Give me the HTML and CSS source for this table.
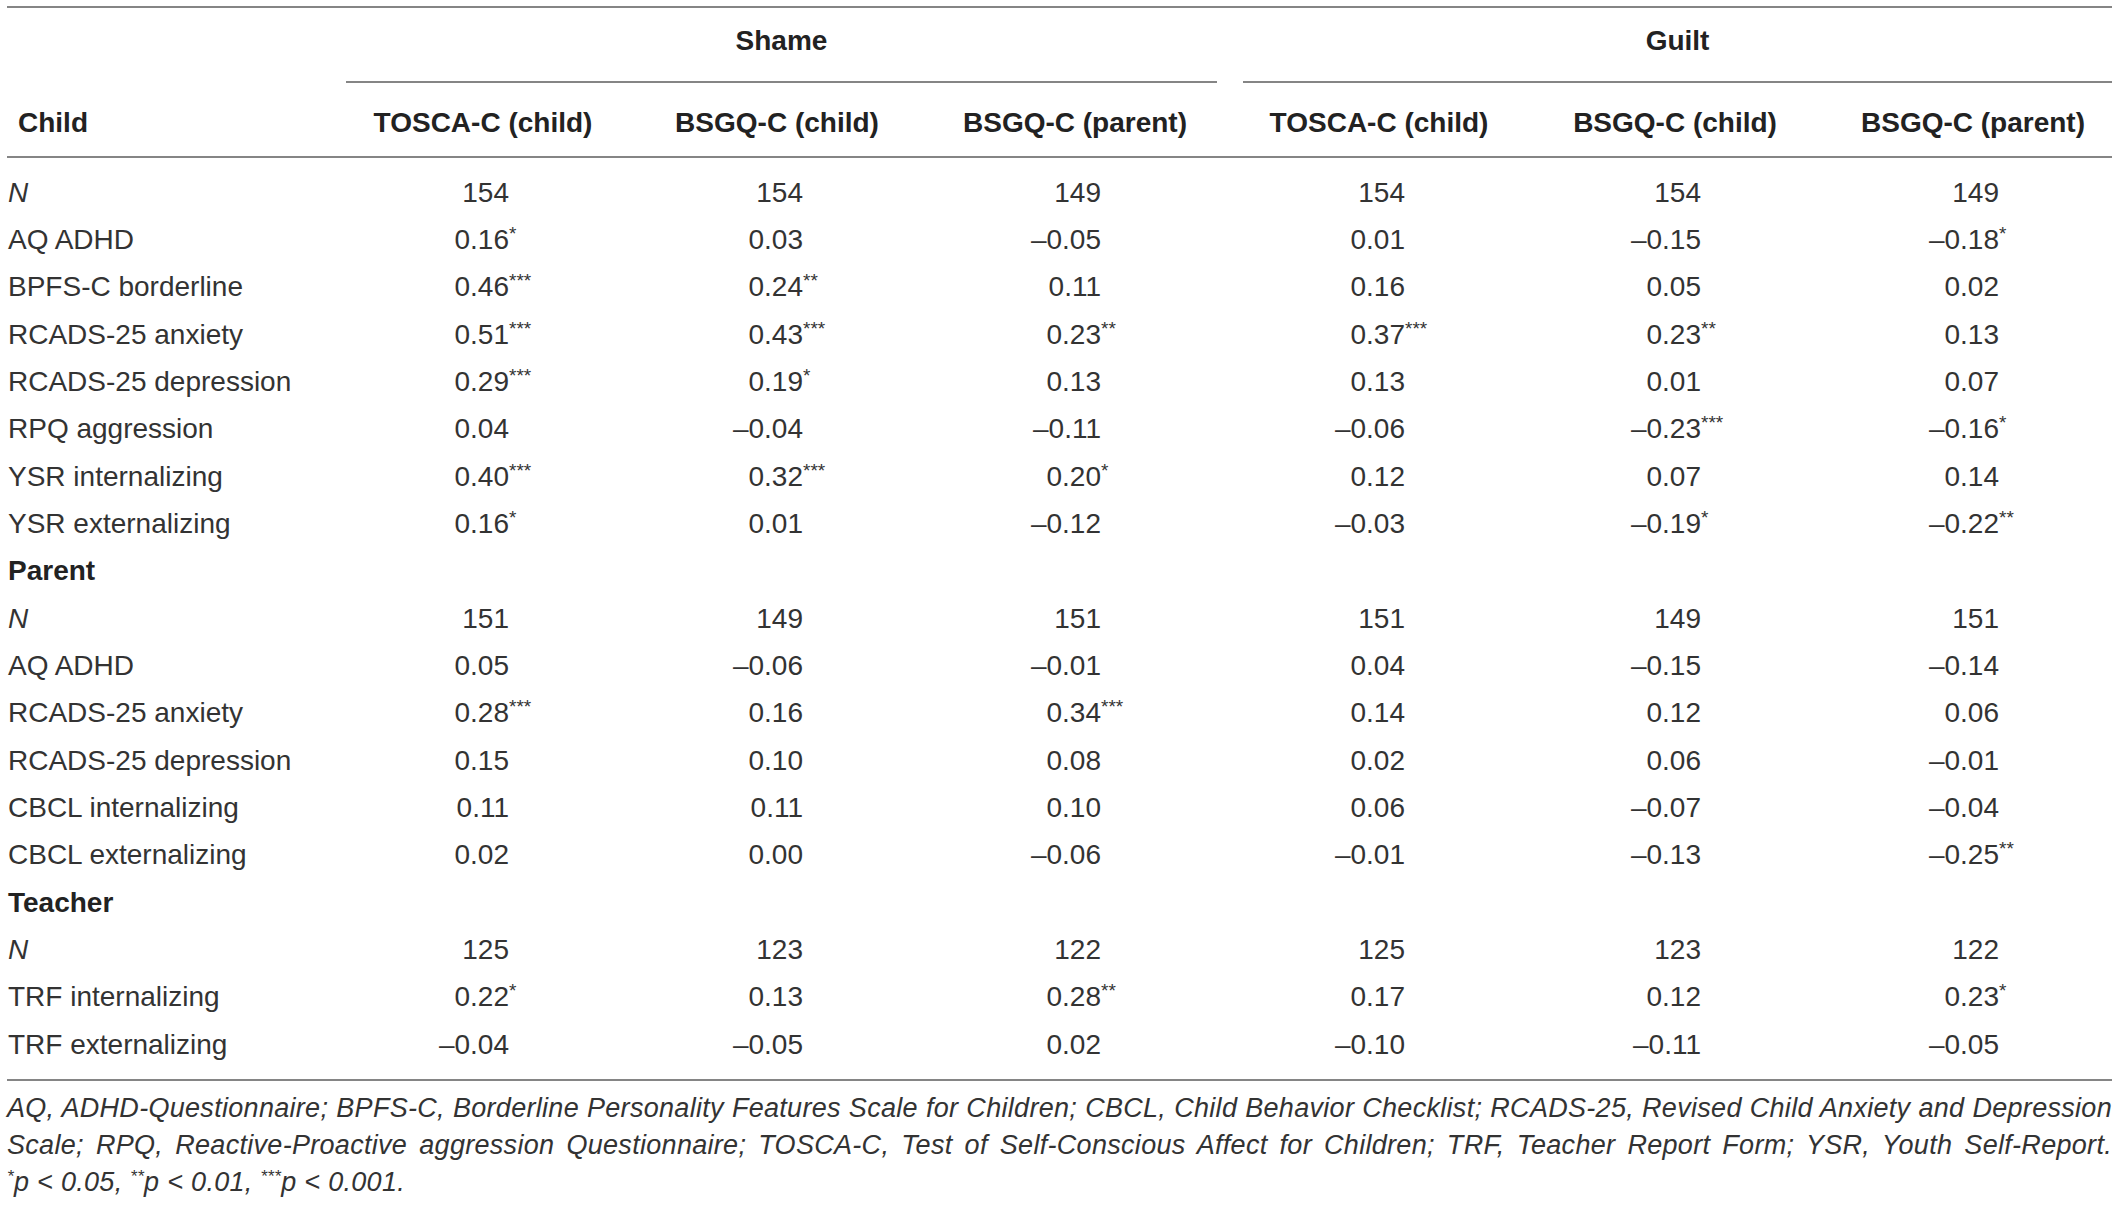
FILE: index.html
```html
<!DOCTYPE html>
<html lang="en">
<head>
    <meta charset="UTF-8">
    <title>Correlations of shame and guilt with psychopathology</title>
    <link rel="stylesheet" href="styles.css">
</head>
<body>
    <div class="page">
        <table class="corr">
            <colgroup>
                <col class="c-label">
                <col class="c1"><col class="c2"><col class="c3">
                <col class="c4"><col class="c5"><col class="c6">
            </colgroup>
            <thead>
                <tr class="group">
                    <th></th>
                    <th colspan="3"><div class="grp shame">Shame</div></th>
                    <th colspan="3"><div class="grp guilt">Guilt</div></th>
                </tr>
                <tr class="cols">
                    <th class="lbl">Child</th>
                    <th>TOSCA-C (child)</th>
                    <th>BSGQ-C (child)</th>
                    <th>BSGQ-C (parent)</th>
                    <th>TOSCA-C (child)</th>
                    <th>BSGQ-C (child)</th>
                    <th class="last">BSGQ-C (parent)</th>
                </tr>
            </thead>
            <tbody>
                <tr class="first">
                    <td><i>N</i></td>
                    <td class="num"><span class="v">154</span></td>
                    <td class="num"><span class="v">154</span></td>
                    <td class="num"><span class="v">149</span></td>
                    <td class="num"><span class="v">154</span></td>
                    <td class="num"><span class="v">154</span></td>
                    <td class="num last"><span class="v">149</span></td>
                </tr>
                <tr>
                    <td>AQ ADHD</td>
                    <td class="num"><span class="v">0.16<sup>*</sup></span></td>
                    <td class="num"><span class="v">0.03</span></td>
                    <td class="num"><span class="v">–0.05</span></td>
                    <td class="num"><span class="v">0.01</span></td>
                    <td class="num"><span class="v">–0.15</span></td>
                    <td class="num last"><span class="v">–0.18<sup>*</sup></span></td>
                </tr>
                <tr>
                    <td>BPFS-C borderline</td>
                    <td class="num"><span class="v">0.46<sup>***</sup></span></td>
                    <td class="num"><span class="v">0.24<sup>**</sup></span></td>
                    <td class="num"><span class="v">0.11</span></td>
                    <td class="num"><span class="v">0.16</span></td>
                    <td class="num"><span class="v">0.05</span></td>
                    <td class="num last"><span class="v">0.02</span></td>
                </tr>
                <tr>
                    <td>RCADS-25 anxiety</td>
                    <td class="num"><span class="v">0.51<sup>***</sup></span></td>
                    <td class="num"><span class="v">0.43<sup>***</sup></span></td>
                    <td class="num"><span class="v">0.23<sup>**</sup></span></td>
                    <td class="num"><span class="v">0.37<sup>***</sup></span></td>
                    <td class="num"><span class="v">0.23<sup>**</sup></span></td>
                    <td class="num last"><span class="v">0.13</span></td>
                </tr>
                <tr>
                    <td>RCADS-25 depression</td>
                    <td class="num"><span class="v">0.29<sup>***</sup></span></td>
                    <td class="num"><span class="v">0.19<sup>*</sup></span></td>
                    <td class="num"><span class="v">0.13</span></td>
                    <td class="num"><span class="v">0.13</span></td>
                    <td class="num"><span class="v">0.01</span></td>
                    <td class="num last"><span class="v">0.07</span></td>
                </tr>
                <tr>
                    <td>RPQ aggression</td>
                    <td class="num"><span class="v">0.04</span></td>
                    <td class="num"><span class="v">–0.04</span></td>
                    <td class="num"><span class="v">–0.11</span></td>
                    <td class="num"><span class="v">–0.06</span></td>
                    <td class="num"><span class="v">–0.23<sup>***</sup></span></td>
                    <td class="num last"><span class="v">–0.16<sup>*</sup></span></td>
                </tr>
                <tr>
                    <td>YSR internalizing</td>
                    <td class="num"><span class="v">0.40<sup>***</sup></span></td>
                    <td class="num"><span class="v">0.32<sup>***</sup></span></td>
                    <td class="num"><span class="v">0.20<sup>*</sup></span></td>
                    <td class="num"><span class="v">0.12</span></td>
                    <td class="num"><span class="v">0.07</span></td>
                    <td class="num last"><span class="v">0.14</span></td>
                </tr>
                <tr>
                    <td>YSR externalizing</td>
                    <td class="num"><span class="v">0.16<sup>*</sup></span></td>
                    <td class="num"><span class="v">0.01</span></td>
                    <td class="num"><span class="v">–0.12</span></td>
                    <td class="num"><span class="v">–0.03</span></td>
                    <td class="num"><span class="v">–0.19<sup>*</sup></span></td>
                    <td class="num last"><span class="v">–0.22<sup>**</sup></span></td>
                </tr>
                <tr class="section">
                    <td colspan="7">Parent</td>
                </tr>
                <tr>
                    <td><i>N</i></td>
                    <td class="num"><span class="v">151</span></td>
                    <td class="num"><span class="v">149</span></td>
                    <td class="num"><span class="v">151</span></td>
                    <td class="num"><span class="v">151</span></td>
                    <td class="num"><span class="v">149</span></td>
                    <td class="num last"><span class="v">151</span></td>
                </tr>
                <tr>
                    <td>AQ ADHD</td>
                    <td class="num"><span class="v">0.05</span></td>
                    <td class="num"><span class="v">–0.06</span></td>
                    <td class="num"><span class="v">–0.01</span></td>
                    <td class="num"><span class="v">0.04</span></td>
                    <td class="num"><span class="v">–0.15</span></td>
                    <td class="num last"><span class="v">–0.14</span></td>
                </tr>
                <tr>
                    <td>RCADS-25 anxiety</td>
                    <td class="num"><span class="v">0.28<sup>***</sup></span></td>
                    <td class="num"><span class="v">0.16</span></td>
                    <td class="num"><span class="v">0.34<sup>***</sup></span></td>
                    <td class="num"><span class="v">0.14</span></td>
                    <td class="num"><span class="v">0.12</span></td>
                    <td class="num last"><span class="v">0.06</span></td>
                </tr>
                <tr>
                    <td>RCADS-25 depression</td>
                    <td class="num"><span class="v">0.15</span></td>
                    <td class="num"><span class="v">0.10</span></td>
                    <td class="num"><span class="v">0.08</span></td>
                    <td class="num"><span class="v">0.02</span></td>
                    <td class="num"><span class="v">0.06</span></td>
                    <td class="num last"><span class="v">–0.01</span></td>
                </tr>
                <tr>
                    <td>CBCL internalizing</td>
                    <td class="num"><span class="v">0.11</span></td>
                    <td class="num"><span class="v">0.11</span></td>
                    <td class="num"><span class="v">0.10</span></td>
                    <td class="num"><span class="v">0.06</span></td>
                    <td class="num"><span class="v">–0.07</span></td>
                    <td class="num last"><span class="v">–0.04</span></td>
                </tr>
                <tr>
                    <td>CBCL externalizing</td>
                    <td class="num"><span class="v">0.02</span></td>
                    <td class="num"><span class="v">0.00</span></td>
                    <td class="num"><span class="v">–0.06</span></td>
                    <td class="num"><span class="v">–0.01</span></td>
                    <td class="num"><span class="v">–0.13</span></td>
                    <td class="num last"><span class="v">–0.25<sup>**</sup></span></td>
                </tr>
                <tr class="section">
                    <td colspan="7">Teacher</td>
                </tr>
                <tr>
                    <td><i>N</i></td>
                    <td class="num"><span class="v">125</span></td>
                    <td class="num"><span class="v">123</span></td>
                    <td class="num"><span class="v">122</span></td>
                    <td class="num"><span class="v">125</span></td>
                    <td class="num"><span class="v">123</span></td>
                    <td class="num last"><span class="v">122</span></td>
                </tr>
                <tr>
                    <td>TRF internalizing</td>
                    <td class="num"><span class="v">0.22<sup>*</sup></span></td>
                    <td class="num"><span class="v">0.13</span></td>
                    <td class="num"><span class="v">0.28<sup>**</sup></span></td>
                    <td class="num"><span class="v">0.17</span></td>
                    <td class="num"><span class="v">0.12</span></td>
                    <td class="num last"><span class="v">0.23<sup>*</sup></span></td>
                </tr>
                <tr class="final">
                    <td>TRF externalizing</td>
                    <td class="num"><span class="v">–0.04</span></td>
                    <td class="num"><span class="v">–0.05</span></td>
                    <td class="num"><span class="v">0.02</span></td>
                    <td class="num"><span class="v">–0.10</span></td>
                    <td class="num"><span class="v">–0.11</span></td>
                    <td class="num last"><span class="v">–0.05</span></td>
                </tr>
            </tbody>
        </table>

        <div class="notes">
            <div class="line">AQ, ADHD-Questionnaire; BPFS-C, Borderline Personality Features Scale for Children; CBCL, Child Behavior Checklist; RCADS-25, Revised Child Anxiety and Depression</div>
            <div class="line">Scale; RPQ, Reactive-Proactive aggression Questionnaire; TOSCA-C, Test of Self-Conscious Affect for Children; TRF, Teacher Report Form; YSR, Youth Self-Report.</div>
            <div class="sig"><sup>*</sup>p &lt; 0.05, <sup>**</sup>p &lt; 0.01, <sup>***</sup>p &lt; 0.001.</div>
        </div>
    </div>
</body>
</html>
```

FILE: styles.css
```css
body {
    margin: 0;
    background: #fff;
    font-family: "Liberation Sans", Arial, sans-serif;
    color: #333;
}
.page {
    padding: 6px 8px 0 7px;
}
.corr {
    width: 2105px;
    table-layout: fixed;
    border-collapse: collapse;
    border-top: 2px solid #858585;
    border-bottom: 2px solid #858585;
    font-size: 28px;
}
.c-label { width: 329px; }
.c1 { width: 294px; }
.c2 { width: 294px; }
.c3 { width: 302px; }
.c4 { width: 306px; }
.c5 { width: 286px; }
.c6 { width: 294px; }

.corr th {
    padding: 0;
    font-weight: bold;
    color: #222;
    text-align: center;
    white-space: nowrap;
    line-height: 34px;
}
.group .grp {
    padding: 16px 0 23px;
    border-bottom: 2px solid #858585;
}
.group .shame {
    margin: 0 9px 0 10px;
}
.group .guilt {
    margin: 0 0 0 17px;
}
.cols th {
    padding: 23px 0 16px;
    border-bottom: 2px solid #858585;
}
.cols th.lbl {
    text-align: left;
    padding-left: 11px;
}
.cols th.last {
    padding-left: 16px;
}

.corr td {
    height: 47.33px;
    padding: 0 0 0 1px;
    line-height: 30px;
    white-space: nowrap;
}
.corr tr.first td {
    padding-top: 11px;
}
.corr tr.final td {
    padding-bottom: 11px;
}
.corr td.num {
    text-align: center;
    padding: 0 24px 0 0;
}
.corr tr.first td.num {
    padding-top: 11px;
}
.corr tr.final td.num {
    padding-bottom: 11px;
}
.corr td.num.last {
    padding-left: 16px;
}
.v {
    display: inline-block;
    width: 76px;
    text-align: right;
}
.v sup,
.sig sup {
    display: inline-block;
    width: 0;
    font-size: 19px;
    line-height: 0;
    vertical-align: 9px;
    text-align: left;
}
.section td {
    font-weight: bold;
    color: #222;
}

.notes {
    width: 2105px;
    margin-top: 9px;
    font-size: 27px;
    letter-spacing: 0.3px;
    font-style: italic;
    line-height: 37px;
    color: #333;
}
.notes .line {
    text-align: justify;
    text-align-last: justify;
}
.sig sup {
    width: auto;
    font-size: 17px;
    vertical-align: 9px;
}
```
